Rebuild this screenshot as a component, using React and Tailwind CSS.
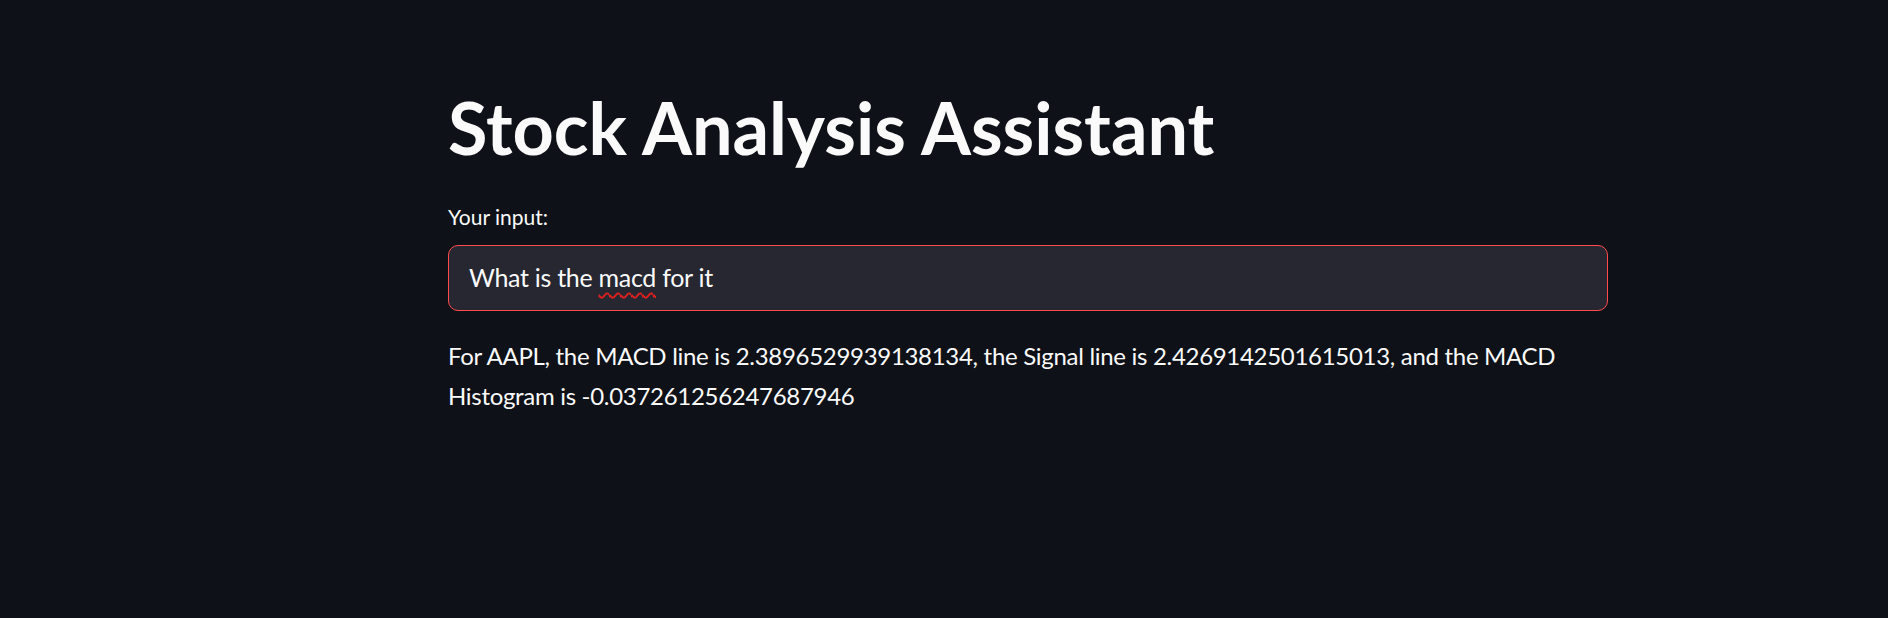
export default function App() {
  return (
    <div className="min-h-screen bg-[#0e1117] text-[#fafafa] font-['Lato',sans-serif]">
      <div className="ml-[448px] w-[1160px] pt-[91px] flex flex-col">
        <h1 className="text-[72px] leading-[72px] font-bold">
          Stock Analysis Assistant
        </h1>

        <label className="mt-[39px] text-[21px] leading-[30px]">Your input:</label>

        <div className="mt-[13px] h-[66px] rounded-[10px] border border-[#ff4b4b] bg-[#262730] px-[20px] flex items-center text-[25px] tracking-[-0.3px]">
          <span>
            What is the{" "}
            <span className="underline decoration-wavy decoration-[#e0201f] decoration-[1.5px] underline-offset-[5px]">
              macd
            </span>{" "}
            for it
          </span>
        </div>

        <p className="mt-[25px] text-[24px] leading-[40px] tracking-[-0.3px]">
          For AAPL, the MACD line is 2.3896529939138134, the Signal line is 2.4269142501615013, and the MACD
          Histogram is -0.037261256247687946
        </p>
      </div>
    </div>
  );
}
